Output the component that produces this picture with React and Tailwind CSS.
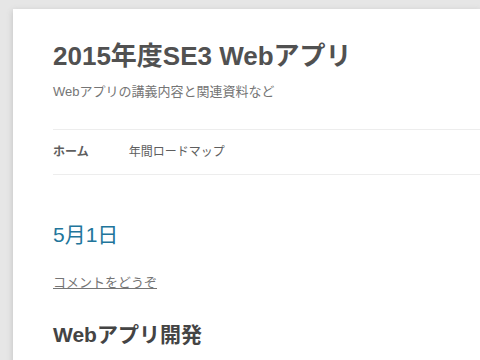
export default function App() {
  const font = { fontFamily: '"Liberation Sans", "Noto Sans CJK JP", sans-serif' };
  return (
    <div className="h-[360px] w-[480px] overflow-hidden bg-[#e6e6e6] pl-[13px] pt-[9px]" style={font}>
      <div className="h-[400px] bg-white pl-[40px] pt-[31px] shadow-[0_2px_6px_rgba(100,100,100,0.3)]">
        <h1 className="text-[26px] font-bold leading-[32px] text-[#515151] whitespace-nowrap">2015年度SE3 Webアプリ</h1>
        <p className="mt-[10px] text-[13px] leading-[20px] text-[#757575] whitespace-nowrap">Webアプリの講義内容と関連資料など</p>
        <nav className="mt-[27px] flex h-[46px] items-center gap-[40px] border-y border-[#ededed] text-[12px] text-[#5e5e5e]">
          <span className="font-bold">ホーム</span>
          <span>年間ロードマップ</span>
        </nav>
        <h2 className="mt-[46px] text-[21px] leading-[28px] text-[#21759b]">5月1日</h2>
        <div className="mt-[24px] text-[13px] leading-[20px] text-[#757575]">
          <span className="underline">コメントをどうぞ</span>
        </div>
        <h2 className="mt-[28px] text-[21px] font-bold leading-[28px] text-[#444]">Webアプリ開発</h2>
      </div>
    </div>
  );
}
